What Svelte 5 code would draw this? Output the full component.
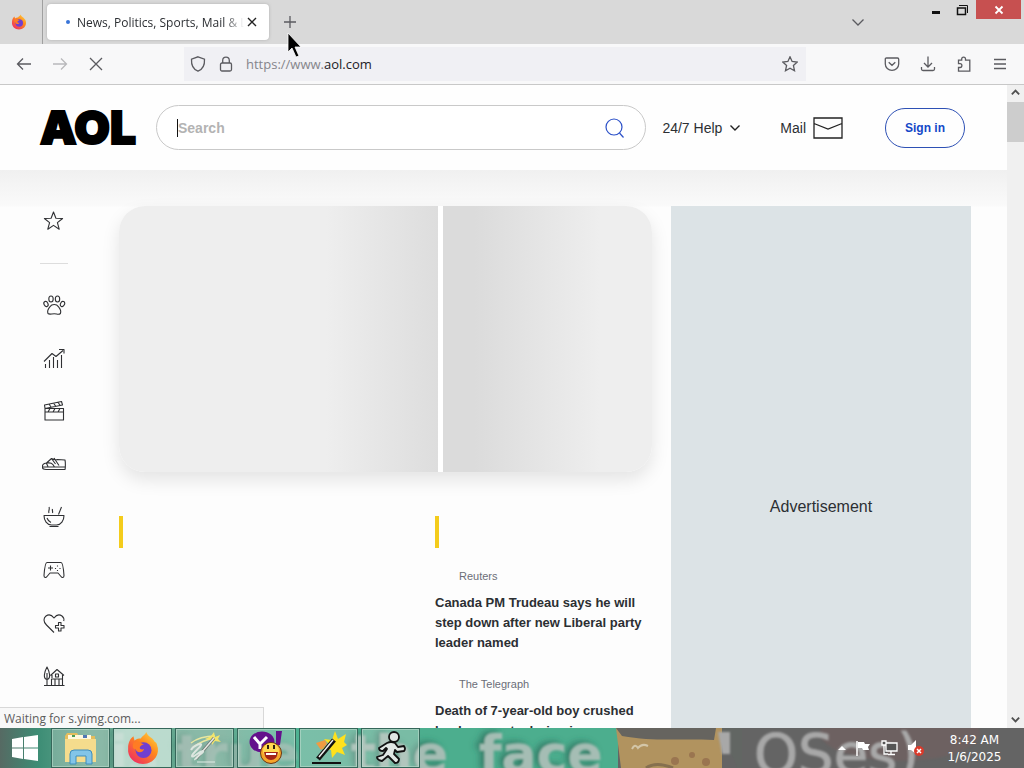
<script>
  const headlines = [
    { source: 'Reuters', title: 'Canada PM Trudeau says he will step down after new Liberal party leader named' },
    { source: 'The Telegraph', title: 'Death of 7-year-old boy crushed by dance gate during in' }
  ];
  const topics = ['Pets', 'Finance', 'Entertainment', 'Style', 'Food', 'Games', 'Health', 'Home'];
  let query = $state('');
</script>

{#snippet topicIcon(name)}
  <svg class="line" width="24" height="24" viewBox="0 0 24 24" aria-hidden="true">
    {#if name === 'Pets'}
      <ellipse cx="4" cy="11" rx="2" ry="2.700" transform="rotate(-25 4 11)" />
      <ellipse cx="9" cy="6" rx="2.200" ry="3" />
      <ellipse cx="15.500" cy="6" rx="2.200" ry="3" />
      <ellipse cx="20.500" cy="11" rx="2" ry="2.700" transform="rotate(25 20.500 11)" />
      <path d="M6 20.500c-1-2.500.4-5 1.800-6.700 2.300-3 6.600-3 8.800 0 1.400 1.700 2.800 4.200 1.800 6.700-1.600 1.600-3.700.2-6.200.2s-4.800 1.200-6.200-.2z" />
    {:else if name === 'Finance'}
      <path d="M2 15.500l8-8 4 3 7-6M17 3.500h5v4M3.500 22v-4M7.500 22v-8M11.500 22V11M15.500 22v-8M19.500 22V9" />
    {:else if name === 'Entertainment'}
      <path d="M3 9.500h18.500V21H3zM3 13h18.500M3 9.500L2.500 6 19.500 2.500l1 3.500L3 9.500M7 5l2 3M11.500 4l2 3M16 3.200l2 3M6 13l2-3.500M11 13l2-3.500M16 13l2-3.500" />
    {:else if name === 'Style'}
      <path d="M.5 15.500c-.5-3 1-4 4-4.500l5-4.500c2 1.300 4 1.500 6 1l7.500.5c.5 2 .5 8 0 9.500H4c-2 0-3.500-.5-3.500-2zM.5 15h23M4.500 11c4-.5 6 0 8 4M9.500 6.500l4 5.500M12 6l5 7.500M4.500 11.500l1.500 3" />
    {:else if name === 'Food'}
      <path d="M2 10.500h20c0 5-3 9.500-7.500 9.500h-5C5 20 2 15.500 2 10.500zM7.500 21.500h9M5 13c.7 2 2 3.500 4 4.500M7 8c-1-2 1-3.500 0-6M10.500 8c.6-1.500-.6-2.500 0-4M16.500 9.500L19.500 2" />
    {:else if name === 'Games'}
      <path d="M5 4.500h14c1.500 0 2.500 6 3 13 0 2.500-2 2.500-3 1l-3-3.500H8l-3 3.500c-1 1.500-3 1.500-3-1 .5-7 1.500-13 3-13zM8.500 7.500v5M6 10h5" />
      <path d="M15.500 7.500v1M18 10v1M13.500 10v1M15.500 12v1" />
    {:else if name === 'Health'}
      <path d="M12 21.500l-7.500-7.500C1 10.500 1.500 7 4 5c3-2.200 6-.7 8 2 2-2.700 5-4.200 8-2 1.500 1.200 2.200 3.200 1.700 5M16.500 11.500h2.500v3h3v2.500h-3v3h-2.500v-3h-3v-2.500h3z" />
    {:else}
      <path d="M2 21.500h20.500M5 21.500V9M5 15.500c-4-1-3-7 0-12.500 3 5.500 4 11.500 0 12.500zM8.500 11.500l6.500-6 7 6M10 11v3M20.500 10v11M9.500 21.500V15h11M13 21.500V15M17 21.500V15M13.500 10h3v3h-3z" />
    {/if}
  </svg>
{/snippet}

<div class="screen">
  <div class="tabs">
    <button class="pinned" aria-label="Pinned tab">
      <svg width="16" height="16" viewBox="0 0 32 32" aria-hidden="true"><use href="#fox" /></svg>
    </button>
    <div class="tab">
      <span class="loading"></span>
      <span class="tab-title">News, Politics, Sports, Mail &amp; Latest Headlines - AOL.com</span>
      <button aria-label="Close tab"><svg class="dark" width="10" height="10" viewBox="0 0 10 10"><path d="M1 1l8 8M9 1L1 9" /></svg></button>
    </div>
    <button class="new-tab" aria-label="New tab"><svg class="gray" width="14" height="14" viewBox="0 0 14 14"><path d="M7 1v12M1 7h12" /></svg></button>
    <button class="all-tabs" aria-label="List all tabs"><svg class="gray" width="14" height="14" viewBox="0 0 14 14"><path d="M1.500 4.500L7 10l5.500-5.500" /></svg></button>
    <div class="win-controls">
      <button aria-label="Minimize"><svg width="12" height="12" viewBox="0 0 12 12"><path d="M2 7h8v3H2z" fill="#111" /></svg></button>
      <button aria-label="Restore"><svg width="12" height="12" viewBox="0 0 12 12" fill="none" stroke="#111"><path d="M1.500 4h8v6.500h-8z" stroke-width="1.500" /><path d="M3 1.500h8.500V9" /></svg></button>
      <button class="close" aria-label="Close"><svg width="10" height="10" viewBox="0 0 10 10" stroke="#fff" stroke-width="1.800"><path d="M1.500 1.500l7 7M8.500 1.500l-7 7" /></svg></button>
    </div>
  </div>

  <div class="toolbar">
    <button aria-label="Back"><svg class="gray" width="16" height="16" viewBox="0 0 16 16"><path d="M15 8H1.500M7 2.500L1.500 8 7 13.500" /></svg></button>
    <button class="off" aria-label="Forward" disabled><svg class="gray" width="16" height="16" viewBox="0 0 16 16"><path d="M1 8h13.500M9 2.500L14.500 8 9 13.500" /></svg></button>
    <button aria-label="Stop"><svg class="gray" width="16" height="16" viewBox="0 0 16 16"><path d="M2 2l12 12M14 2L2 14" /></svg></button>
    <div class="address">
      <svg class="gray" width="16" height="16" viewBox="0 0 16 16" aria-hidden="true"><path d="M8 .8l6.500 2.400c.3 5.500-1.500 10-6.500 12C3 13.200 1.200 8.700 1.500 3.200z" /></svg>
      <svg class="gray" width="16" height="16" viewBox="0 0 16 16" aria-hidden="true"><rect x="2.500" y="7" width="11" height="8" rx="1.500" /><path d="M4.700 7V4.500a3.300 3.300 0 0 1 6.600 0V7" /></svg>
      <a class="url" href="https://www.aol.com">https://www.<b>aol.com</b></a>
      <button class="mark" aria-label="Bookmark"><svg class="gray" width="16" height="16" viewBox="0 0 16 16"><path d="M8 .8l2.100 4.700 5.100.5-3.800 3.500 1.100 5.200L8 12.200l-4.500 2.500 1.100-5.200L.8 6l5.100-.5z" /></svg></button>
    </div>
    <div class="tools">
      <button aria-label="Pocket"><svg class="gray" width="16" height="16" viewBox="0 0 16 16"><path d="M2.500 2h11c.8 0 1.200.4 1.200 1.200V8a6.700 6.300 0 0 1-13.400 0V3.200C1.300 2.400 1.700 2 2.500 2zM4.700 6.300L8 9.300l3.300-3" /></svg></button>
      <button aria-label="Downloads"><svg class="gray" width="16" height="16" viewBox="0 0 16 16"><path d="M8 .5v10M4 7l4 4 4-4M1.500 11v2c0 1 .5 1.500 1.500 1.500h10c1 0 1.500-.5 1.500-1.500v-2" /></svg></button>
      <button aria-label="Extensions"><svg class="gray" width="16" height="16" viewBox="0 0 16 16"><path d="M5.700 4.200V3a1.900 1.900 0 0 1 3.800 0v1.200h4.300v11H2.500v-3.700H4a1.900 1.900 0 0 0 0-3.800H2.500V4.200z" /></svg></button>
      <button aria-label="Menu"><svg class="gray" width="16" height="16" viewBox="0 0 16 16"><path d="M2 3.500h12M2 8h12M2 12.500h12" /></svg></button>
    </div>
  </div>

  <div class="viewport">
    <div class="page">
      <header>
        <a class="logo" href="https://www.aol.com">AOL</a>
        <form class="search">
          <span class="caret"></span>
          <input aria-label="Search" placeholder="Search" bind:value={query} />
          <button aria-label="Submit search"><svg width="20" height="20" viewBox="0 0 20 20" fill="none" stroke="#2b50c8" stroke-width="1.200"><circle cx="9" cy="9" r="8" /><path d="M14.500 15l4 4.500" /></svg></button>
        </form>
        <button class="help">24/7 Help <svg class="dark" width="12" height="12" viewBox="0 0 12 12"><path d="M1.500 3.500L6 8l4.500-4.500" /></svg></button>
        <a class="mail" href="https://mail.aol.com">Mail <svg width="30" height="22" viewBox="0 0 30 22" fill="none" stroke="#222" stroke-width="1.300"><path d="M1 1h28v20H1zM1 6.500l14 5.500 14-5.500" /></svg></a>
        <a class="signin" href="https://login.aol.com">Sign in</a>
      </header>
      <main>
        <nav aria-label="Topics">
          <a href="#favorites" aria-label="Favorites"><svg class="line" width="24" height="24" viewBox="0 0 24 24"><path d="M11.500 3l2.400 6.300 6.700.2-5.200 4.100 1.800 6.600-5.700-3.800-5.700 3.800 1.800-6.600-5.200-4.100 6.700-.2z" /></svg></a>
          <hr />
          {#each topics as topic}
            <a href={'#' + topic.toLowerCase()} aria-label={topic}>{@render topicIcon(topic)}</a>
          {/each}
        </nav>
        <div class="feed">
          <div class="hero"><div class="lead"></div><div class="side"></div></div>
          <div class="columns">
            <section><div class="bar"></div></section>
            <section>
              <div class="bar"></div>
              {#each headlines as item}
                <article>
                  <p>{item.source}</p>
                  <h3>{item.title}</h3>
                </article>
              {/each}
            </section>
          </div>
        </div>
        <aside>Advertisement</aside>
      </main>
    </div>
    <div class="scroll" aria-hidden="true">
      <svg width="11" height="11" viewBox="0 0 12 12"><path d="M2 8l4-4 4 4" /></svg>
      <div class="thumb"></div>
      <svg width="11" height="11" viewBox="0 0 12 12"><path d="M2 4l4 4 4-4" /></svg>
    </div>
    <div class="status">Waiting for s.yimg.com...</div>
  </div>

  <footer class="taskbar">
    <svg class="wallpaper" width="1024" height="40" viewBox="0 0 1024 40" aria-hidden="true">
      <defs>
        <linearGradient id="desk" x1="0" x2="1"><stop offset="0" stop-color="#566a63" /><stop offset=".06" stop-color="#3d8d75" /><stop offset=".14" stop-color="#67a890" /><stop offset=".35" stop-color="#65a890" /><stop offset=".42" stop-color="#4fb394" /><stop offset=".62" stop-color="#4cae8e" /></linearGradient>
        <filter id="haze"><feGaussianBlur stdDeviation="1.300" /></filter>
        <filter id="letters" x="-10%" width="120%" y="-20%" height="140%"><feDropShadow dx="-4" dy="-2" stdDeviation="3" flood-color="#2c6a5a" flood-opacity=".8" /><feGaussianBlur stdDeviation=".9" /></filter>
      </defs>
      <rect width="640" height="40" fill="url(#desk)" />
      <path d="M618 0h406v40H618z" fill="#646464" />
      <ellipse cx="900" cy="5" rx="80" ry="28" fill="#765f5f" opacity=".5" filter="url(#haze)" />
      <g filter="url(#letters)" fill="#a5bdb4" font-family="DejaVu Sans" font-weight="bold" font-size="52"><text x="110" y="44" opacity=".6">is true</text><text x="351" y="44">the</text><text x="479" y="44">face</text></g>
      <path d="M616 0h106v40H621z" fill="#b1935f" />
      <path d="M616 0h100l-2 12c-34-2-58 2-92-4z" fill="#66645f" />
      <path d="M632 21q3-6 6-1 4-5 10-2" fill="none" stroke="#d3c6a8" stroke-width="2" />
      <path d="M646 40q10-7 27 0" fill="none" stroke="#86704f" stroke-width="3" />
      <g fill="#9a7550"><circle cx="675" cy="33" r="4" /><circle cx="692" cy="27" r="3" /><circle cx="706" cy="34" r="4" /></g>
      <path d="M722 0h20v40h-5c-4-14-9-19-15-22z" fill="#626663" />
      <g filter="url(#haze)" fill="#a8a8a8" font-family="DejaVu Sans" font-size="56"><path d="M718 4h12v22h-8z" /><text x="754" y="45" stroke="#a8a8a8" stroke-width="1">OSes)</text></g>
    </svg>
    <button class="start" aria-label="Start"><svg width="28" height="26" viewBox="0 0 28 26" fill="#fff"><path d="M1 4l11-2v10.500H1zM13 2l14-2v12.500H13zM1 13.500h11V24L1 22zM13 13.500h14V26l-14-2z" /></svg></button>
    <button class="task" aria-label="File Explorer">
      <svg width="36" height="34" viewBox="0 0 36 34"><path d="M2 5l2-3h10l2 3h16v26H2z" fill="#e4bd5d" /><path d="M5 4h23v4H5z" fill="#fff8dc" /><path d="M9 4h3v2H9z" fill="#4b9b55" /><path d="M20 4h4v3h-4z" fill="#5278b5" /><path d="M2 8h31v23H2z" fill="#f5dc8d" /><path d="M7 33V23q0-4 4-4h14q4 0 4 4v10h-6v-8H13v8z" fill="#82c5e8" stroke="#3e8dbb" /></svg>
    </button>
    <button class="task active" aria-label="Firefox">
      <svg width="34" height="34" viewBox="0 0 32 32">
        <defs><linearGradient id="flame" x1="1" y1="0" x2=".2" y2="1"><stop stop-color="#ffe14a" /><stop offset=".45" stop-color="#ff8a1c" /><stop offset="1" stop-color="#ef2c63" /></linearGradient></defs>
        <g id="fox"><path d="M19 1c2 5 6 5 8 9 2 1 2 2 3 6 1 9-6 15-14 15S1 25 2 16C2 11 4 7 7 5l1 4c2-2 4-2 6-2 2-3 4-3 5-6z" fill="url(#flame)" /><circle cx="16.500" cy="18" r="7.500" fill="#713fd0" /><path d="M7 11c4-2 7 0 10 2-3 0-4 2-4 3s2 2 4 1c-1 4-7 4-8 0-3 0-3-3-2-6z" fill="#ff7c24" /></g>
      </svg>
    </button>
    <button class="task" aria-label="Web pages tool">
      <svg width="36" height="34" viewBox="0 0 36 34" fill="none"><path d="M4 12q9-7 24-7M6 16q10-7 22-9" stroke="#e9e7a0" stroke-width="1.500" /><path d="M27 1l1 5 5-2-2 4 3 3-6-1-3 4-1-5-6-1 6-3z" fill="#f3e56c" /><path d="M27 7L9 28" stroke="#6a7772" stroke-width="3" /><path d="M27 7L9 28" stroke="#e8e8e2" stroke-width="1.500" /><path d="M4 19c2-4 11-8 10-5s-9 8-9 11 9-6 11-5-9 7-8 9" stroke="#dde6e0" stroke-width="2" /><path d="M10 31h18" stroke="#dfece5" /></svg>
    </button>
    <button class="task" aria-label="Yahoo! Messenger">
      <svg width="36" height="34" viewBox="0 0 36 34"><ellipse cx="13" cy="11" rx="12.500" ry="10.500" fill="#64108c" /><path d="M5 6l6 7v5M18 6l-7 7" fill="none" stroke="#fff" stroke-width="3" /><path d="M27 0h6l-2 14h-4z" fill="#64108c" /><circle cx="22" cy="22" r="10.500" fill="#f6a62b" stroke="#6c3513" /><circle cx="22" cy="20" r="8" fill="#ffd953" /><path d="M15 21h14q-1 8-7 8t-7-8z" fill="#a32518" /><path d="M17 22h10v2H17z" fill="#fff" /><path d="M19 14v4M25 14v4" stroke="#302010" stroke-width="2" /></svg>
    </button>
    <button class="task" aria-label="Magic wand">
      <svg width="36" height="34" viewBox="0 0 36 34"><path d="M24 0l3 8 8-5-2 8 3 3-5 3 3 7-8-3-5 6-1-8-9-1 7-5-5-5 8 1z" fill="#ffe11c" /><path d="M5 12l9-3 2 4-6 6z" fill="#ef9b42" /><path d="M23 9L7 28" stroke="#111" stroke-width="5" /><path d="M22 9L8 26" stroke="#eee" stroke-width="1.500" /><path d="M1 32h29" stroke="#111" stroke-width="2" /></svg>
    </button>
    <button class="task" aria-label="AIM">
      <svg width="36" height="34" viewBox="0 0 36 34" fill="#e1e7e4" stroke="#111" stroke-width="1.800" stroke-linejoin="round"><path d="M14 12q4-2 8 0l3 4 6-1q2 3 0 5l-7 1-2-2-1 4 5 5q0 4-4 4l-7-7-6 5q-5-1-5-4l6-2 4-6-1-1-3 3q-4 0-4-3z" /><circle cx="21" cy="6" r="5" /></svg>
    </button>
    <div class="tray">
      <svg width="8" height="6" viewBox="0 0 8 6" fill="#fff"><path d="M0 5l4-4 4 4z" /></svg>
      <svg width="16" height="16" viewBox="0 0 16 16"><path d="M2 1v15" stroke="#fff" stroke-width="1.500" /><path d="M3 2h6l1 2h5l-2 3 1 3H8L7 8H3z" fill="#fff" /></svg>
      <svg width="18" height="16" viewBox="0 0 18 16" fill="#555" stroke="#fff" stroke-width="1.300"><path d="M6 3h11v8H6zM11 11v3M8 14.500h7M2 1h4v4H2zM4 5v9h4" /></svg>
      <svg width="18" height="18" viewBox="0 0 18 18"><path d="M1 6h3l5-5v14l-5-4H1z" fill="#fff" /><circle cx="12" cy="12" r="5" fill="#d93a2b" /><path d="M10 10l4 4M14 10l-4 4" stroke="#fff" stroke-width="1.500" /></svg>
    </div>
    <div class="clock"><span>8:42 AM</span><span>1/6/2025</span></div>
  </footer>

  <svg class="pointer" width="16" height="26" viewBox="0 0 16 26" aria-hidden="true"><path d="M1 1v19l4-4 4 9 3-1-4-9h6z" fill="#000" stroke="#fff" stroke-width=".8" /></svg>
</div>

<style>
  :global(body) { margin: 0; overflow: hidden; }
  .screen { position: relative; display: flex; flex-direction: column; height: 100vh; font-family: "Liberation Sans", Arial, sans-serif; background: #fdfdfd; color: #2c2f33; }
  .screen * { box-sizing: border-box; }
  button { display: flex; align-items: center; justify-content: center; padding: 0; border: 0; background: none; color: inherit; font: inherit; }
  a { color: inherit; text-decoration: none; }
  svg { flex: none; }
  .gray { fill: none; stroke: #5b5b60; stroke-width: 1.3; }
  .dark { fill: none; stroke: #222; stroke-width: 1.4; }
  .line { display: block; fill: none; stroke: #2f3033; stroke-width: 1.1; stroke-linejoin: round; }

  .tabs { display: flex; flex: none; height: 44px; background: #d9d9d9; font-family: "Open Sans", "Noto Sans", sans-serif; }
  .pinned { width: 43px; padding-right: 4px; border-right: 1px solid #a0a0a0; }
  .tab { display: flex; align-items: center; width: 222px; height: 36px; margin: 4px 0 0 4px; padding: 0 9px 0 19px; border-radius: 4px; background: #fff; box-shadow: 0 0 3px #8888; }
  .loading { flex: none; width: 4px; height: 4px; margin-right: 7px; border-radius: 50%; background: #3874d8; }
  .tab-title { flex: 1; overflow: hidden; font-size: 12px; white-space: nowrap; mask-image: linear-gradient(90deg, #000 88%, transparent); }
  .tab button { width: 16px; height: 16px; }
  .new-tab { width: 42px; }
  .all-tabs { width: 30px; margin-left: auto; }
  .win-controls { display: flex; align-items: flex-start; margin: 0 3px 0 50px; }
  .win-controls button { width: 26px; height: 19px; }
  .win-controls .close { width: 45px; margin-left: 1px; background: #c75050; }

  .toolbar { display: flex; flex: none; align-items: center; height: 41px; padding: 0 8px; border-bottom: 1px solid #c8c8c8; background: #f8f8f9; }
  .toolbar button { width: 32px; height: 32px; margin-right: 4px; }
  .off { opacity: .4; }
  .address { display: flex; flex: 1; align-items: center; gap: 12px; height: 34px; margin-left: 68px; padding-left: 6px; background: #f0f0f4; }
  .url { flex: 1; color: #85858b; font: 13px "Open Sans", "Noto Sans", sans-serif; }
  .url b { color: #202024; font-weight: 400; }
  .address .mark { margin: 0; }
  .tools { display: flex; gap: 4px; margin-left: 70px; }
  .tools button { margin: 0; }

  .viewport { position: relative; display: flex; flex: 1; min-height: 0; }
  .page { flex: 1; min-width: 0; overflow: hidden; background: linear-gradient(#f0f0f0, #fafafa 36px, #fdfdfd 37px) 0 85px no-repeat; }
  header { display: flex; align-items: center; height: 85px; padding: 0 42px 0 40px; background: #fefefe; }
  .logo { width: 96px; margin-right: 20px; padding-bottom: 2px; color: #000; font: 900 46px/46px Inter, sans-serif; -webkit-text-stroke: 2px #000; }
  .search { display: flex; flex: 1; align-items: center; height: 45px; padding: 0 20px; border: 1px solid #c9c9c9; border-radius: 23px; background: #fff; }
  .caret { width: 1px; height: 18px; background: #111; }
  .search input { flex: 1; min-width: 0; padding: 0; border: 0; outline: 0; background: none; font: 700 14px "Liberation Sans", sans-serif; }
  .search input::placeholder { color: #b3b3b3; opacity: 1; }
  .help { gap: 7px; margin-left: 16px; font-size: 14px; }
  .mail { display: flex; align-items: center; gap: 7px; margin-left: 39px; font-size: 14px; }
  .signin { width: 80px; margin-left: 42px; border: 1px solid #2d50b4; border-radius: 20px; color: #1448c8; font: 700 12px/38px "Liberation Sans", sans-serif; text-align: center; }

  main { display: flex; align-items: flex-start; padding: 36px 36px 0 40px; }
  nav { display: flex; flex-direction: column; align-items: center; gap: 29px; width: 28px; margin: 3px 51px 0 0; }
  nav hr { width: 28px; height: 1px; margin: 1px 0 0; border: 0; background: #ddd; }
  .feed { flex: 1; min-width: 0; }
  .hero { display: grid; grid-template-columns: 29fr 19fr; gap: 5px; height: 266px; overflow: hidden; border-radius: 26px; background: #fff; box-shadow: 0 8px 18px #0000001a; }
  .lead { background: linear-gradient(90deg, #eee 65%, #ddd); }
  .side { background: linear-gradient(90deg, #dbdbdb 15%, #eee 75%); }
  .columns { display: grid; grid-template-columns: 1fr 217px; margin-top: 44px; }
  .bar { width: 4px; height: 32px; margin-bottom: 20px; background: #f4cc1c; }
  article { margin-bottom: 23px; }
  article p { margin: 0 0 9px 24px; color: #6b6e78; font-size: 11px; line-height: 16px; }
  article h3 { margin: 0; font-size: 13px; line-height: 20px; }
  aside { display: grid; place-items: center; width: 300px; height: 602px; margin-left: 19px; background: #dce3e6; font-size: 16px; }

  .scroll { display: flex; flex-direction: column; align-items: center; width: 17px; padding: 2px 0 3px; background: #f0f0f0; }
  .scroll svg { fill: none; stroke: #505050; stroke-width: 2; }
  .thumb { width: 100%; height: 40px; margin: 4px 0 auto; background: #cdcdcd; }
  .status { position: absolute; bottom: 0; left: 0; width: 264px; height: 21px; padding-left: 4px; border: 1px solid #d8d8d8; border-width: 1px 1px 0 0; background: #f8f8f8; color: #5c5c5c; font: 12px/21px "Open Sans", "Noto Sans", sans-serif; }

  .taskbar { position: relative; display: flex; flex: none; height: 40px; overflow: hidden; background: #646464; }
  .wallpaper { position: absolute; top: 0; left: 0; }
  .taskbar button, .tray, .clock { position: relative; }
  .start { width: 49px; }
  .task { width: 59px; margin: 0 1px 0 2px; border: 1px solid #35675a; box-shadow: inset 0 0 0 1px #bcdccd99; background: #c5d5cd60; }
  .active { background: #e5f5edaa; }
  .tray { display: flex; align-items: center; gap: 9px; margin-left: auto; }
  .clock { display: flex; flex-direction: column; width: 99px; padding: 4px 0 0; color: #fff; font: 12px/17px "DejaVu Sans", sans-serif; text-align: center; }
  .pointer { position: absolute; top: 32px; left: 287px; }
</style>
